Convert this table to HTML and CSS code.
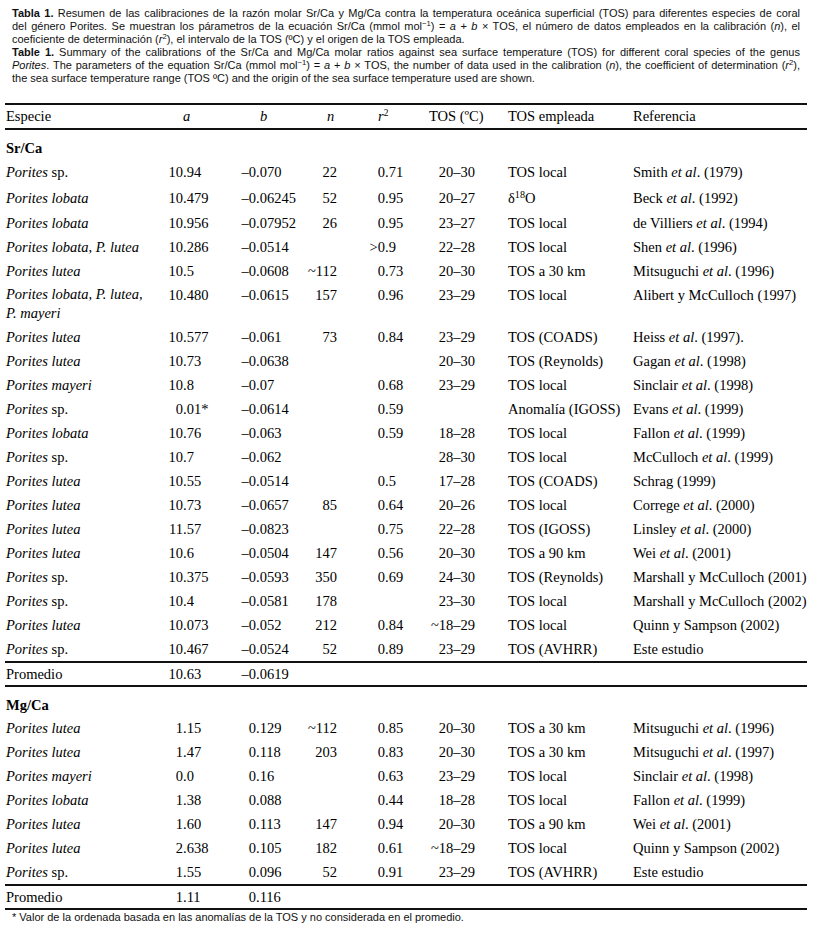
FILE: index.html
```html
<!DOCTYPE html>
<html lang="es">
<head>
<meta charset="utf-8">
<title>Tabla 1</title>
<link rel="stylesheet" href="styles.css">
</head>
<body>
<div class="caption">
  <p class="cap">
    <span class="l"><b>Tabla 1.</b> Resumen de las calibraciones de la razón molar Sr/Ca y Mg/Ca contra la temperatura oceánica superficial (TOS) para diferentes especies de coral</span>
    <span class="l">del género Porites. Se muestran los párametros de la ecuación Sr/Ca (mmol mol<sup>−1</sup>) = <i>a</i> + <i>b</i> × TOS, el número de datos empleados en la calibración (<i>n</i>), el</span>
    <span class="l last">coeficiente de determinación (<i>r</i><sup>2</sup>), el intervalo de la TOS (ºC) y el origen de la TOS empleada.</span>
  </p>
  <p class="cap">
    <span class="l"><b>Table 1.</b> Summary of the calibrations of the Sr/Ca and Mg/Ca molar ratios against sea surface temperature (TOS) for different coral species of the genus</span>
    <span class="l"><i>Porites</i>. The parameters of the equation Sr/Ca (mmol mol<sup>−1</sup>) = <i>a</i> + <i>b</i> × TOS, the number of data used in the calibration (<i>n</i>), the coefficient of determination (<i>r</i><sup>2</sup>),</span>
    <span class="l last">the sea surface temperature range (TOS ºC) and the origin of the sea surface temperature used are shown.</span>
  </p>
</div>

<table class="data">
  <colgroup>
    <col class="c1"><col class="c2"><col class="c3"><col class="c4"><col class="c5"><col class="c6"><col class="c7"><col class="c8">
  </colgroup>
  <thead>
    <tr class="head">
      <th class="h1">Especie</th>
      <th class="h2"><i>a</i></th>
      <th class="h3"><i>b</i></th>
      <th class="h4"><i>n</i></th>
      <th class="h5"><i>r</i><sup>2</sup></th>
      <th class="h6">TOS (ºC)</th>
      <th class="h7">TOS empleada</th>
      <th class="h8">Referencia</th>
    </tr>
  </thead>
  <tbody>
    <tr class="section first"><td colspan="8"><b>Sr/Ca</b></td></tr>
    <tr><td><i>Porites</i> sp.</td><td class="a"><span class="i">10</span>.94</td><td class="b"><span class="i">–0</span>.070</td><td class="n">22</td><td class="r"><span class="i">0</span>.71</td><td class="t">20–30</td><td class="e">TOS local</td><td class="ref">Smith <i>et al</i>. (1979)</td></tr>
    <tr class="tall"><td><i>Porites lobata</i></td><td class="a"><span class="i">10</span>.479</td><td class="b"><span class="i">–0</span>.06245</td><td class="n">52</td><td class="r"><span class="i">0</span>.95</td><td class="t">20–27</td><td class="e">δ<sup class="big">18</sup>O</td><td class="ref">Beck <i>et al</i>. (1992)</td></tr>
    <tr><td><i>Porites lobata</i></td><td class="a"><span class="i">10</span>.956</td><td class="b"><span class="i">–0</span>.07952</td><td class="n">26</td><td class="r"><span class="i">0</span>.95</td><td class="t">23–27</td><td class="e">TOS local</td><td class="ref">de Villiers <i>et al</i>. (1994)</td></tr>
    <tr><td><i>Porites lobata, P. lutea</i></td><td class="a"><span class="i">10</span>.286</td><td class="b"><span class="i">–0</span>.0514</td><td class="n"></td><td class="r"><span class="i">&gt;0</span>.9</td><td class="t">22–28</td><td class="e">TOS local</td><td class="ref">Shen <i>et al</i>. (1996)</td></tr>
    <tr><td><i>Porites lutea</i></td><td class="a"><span class="i">10</span>.5</td><td class="b"><span class="i">–0</span>.0608</td><td class="n">~112</td><td class="r"><span class="i">0</span>.73</td><td class="t">20–30</td><td class="e">TOS a 30 km</td><td class="ref">Mitsuguchi <i>et al</i>. (1996)</td></tr>
    <tr class="double"><td class="twoline"><i>Porites lobata, P. lutea,<br>P. mayeri</i></td><td class="a"><span class="i">10</span>.480</td><td class="b"><span class="i">–0</span>.0615</td><td class="n">157</td><td class="r"><span class="i">0</span>.96</td><td class="t">23–29</td><td class="e">TOS local</td><td class="ref">Alibert y McCulloch (1997)</td></tr>
    <tr><td><i>Porites lutea</i></td><td class="a"><span class="i">10</span>.577</td><td class="b"><span class="i">–0</span>.061</td><td class="n">73</td><td class="r"><span class="i">0</span>.84</td><td class="t">23–29</td><td class="e">TOS (COADS)</td><td class="ref">Heiss <i>et al</i>. (1997).</td></tr>
    <tr><td><i>Porites lutea</i></td><td class="a"><span class="i">10</span>.73</td><td class="b"><span class="i">–0</span>.0638</td><td class="n"></td><td class="r"></td><td class="t">20–30</td><td class="e">TOS (Reynolds)</td><td class="ref">Gagan <i>et al</i>. (1998)</td></tr>
    <tr><td><i>Porites mayeri</i></td><td class="a"><span class="i">10</span>.8</td><td class="b"><span class="i">–0</span>.07</td><td class="n"></td><td class="r"><span class="i">0</span>.68</td><td class="t">23–29</td><td class="e">TOS local</td><td class="ref">Sinclair <i>et al</i>. (1998)</td></tr>
    <tr><td><i>Porites</i> sp.</td><td class="a"><span class="i">0</span>.01*</td><td class="b"><span class="i">–0</span>.0614</td><td class="n"></td><td class="r"><span class="i">0</span>.59</td><td class="t"></td><td class="e">Anomalía (IGOSS)</td><td class="ref">Evans <i>et al</i>. (1999)</td></tr>
    <tr><td><i>Porites lobata</i></td><td class="a"><span class="i">10</span>.76</td><td class="b"><span class="i">–0</span>.063</td><td class="n"></td><td class="r"><span class="i">0</span>.59</td><td class="t">18–28</td><td class="e">TOS local</td><td class="ref">Fallon <i>et al</i>. (1999)</td></tr>
    <tr><td><i>Porites</i> sp.</td><td class="a"><span class="i">10</span>.7</td><td class="b"><span class="i">–0</span>.062</td><td class="n"></td><td class="r"></td><td class="t">28–30</td><td class="e">TOS local</td><td class="ref">McCulloch <i>et al</i>. (1999)</td></tr>
    <tr><td><i>Porites lutea</i></td><td class="a"><span class="i">10</span>.55</td><td class="b"><span class="i">–0</span>.0514</td><td class="n"></td><td class="r"><span class="i">0</span>.5</td><td class="t">17–28</td><td class="e">TOS (COADS)</td><td class="ref">Schrag (1999)</td></tr>
    <tr><td><i>Porites lutea</i></td><td class="a"><span class="i">10</span>.73</td><td class="b"><span class="i">–0</span>.0657</td><td class="n">85</td><td class="r"><span class="i">0</span>.64</td><td class="t">20–26</td><td class="e">TOS local</td><td class="ref">Correge <i>et al</i>. (2000)</td></tr>
    <tr><td><i>Porites lutea</i></td><td class="a"><span class="i">11</span>.57</td><td class="b"><span class="i">–0</span>.0823</td><td class="n"></td><td class="r"><span class="i">0</span>.75</td><td class="t">22–28</td><td class="e">TOS (IGOSS)</td><td class="ref">Linsley <i>et al</i>. (2000)</td></tr>
    <tr><td><i>Porites lutea</i></td><td class="a"><span class="i">10</span>.6</td><td class="b"><span class="i">–0</span>.0504</td><td class="n">147</td><td class="r"><span class="i">0</span>.56</td><td class="t">20–30</td><td class="e">TOS a 90 km</td><td class="ref">Wei <i>et al</i>. (2001)</td></tr>
    <tr><td><i>Porites</i> sp.</td><td class="a"><span class="i">10</span>.375</td><td class="b"><span class="i">–0</span>.0593</td><td class="n">350</td><td class="r"><span class="i">0</span>.69</td><td class="t">24–30</td><td class="e">TOS (Reynolds)</td><td class="ref">Marshall y McCulloch (2001)</td></tr>
    <tr><td><i>Porites</i> sp.</td><td class="a"><span class="i">10</span>.4</td><td class="b"><span class="i">–0</span>.0581</td><td class="n">178</td><td class="r"></td><td class="t">23–30</td><td class="e">TOS local</td><td class="ref">Marshall y McCulloch (2002)</td></tr>
    <tr><td><i>Porites lutea</i></td><td class="a"><span class="i">10</span>.073</td><td class="b"><span class="i">–0</span>.052</td><td class="n">212</td><td class="r"><span class="i">0</span>.84</td><td class="t">~18–29</td><td class="e">TOS local</td><td class="ref">Quinn y Sampson (2002)</td></tr>
    <tr><td><i>Porites</i> sp.</td><td class="a"><span class="i">10</span>.467</td><td class="b"><span class="i">–0</span>.0524</td><td class="n">52</td><td class="r"><span class="i">0</span>.89</td><td class="t">23–29</td><td class="e">TOS (AVHRR)</td><td class="ref">Este estudio</td></tr>
    <tr class="avg"><td>Promedio</td><td class="a"><span class="i">10</span>.63</td><td class="b"><span class="i">–0</span>.0619</td><td></td><td></td><td></td><td></td><td></td></tr>

    <tr class="section second"><td colspan="8"><b>Mg/Ca</b></td></tr>
    <tr><td><i>Porites lutea</i></td><td class="a"><span class="i">1</span>.15</td><td class="b"><span class="i">0</span>.129</td><td class="n">~112</td><td class="r"><span class="i">0</span>.85</td><td class="t">20–30</td><td class="e">TOS a 30 km</td><td class="ref">Mitsuguchi <i>et al</i>. (1996)</td></tr>
    <tr><td><i>Porites lutea</i></td><td class="a"><span class="i">1</span>.47</td><td class="b"><span class="i">0</span>.118</td><td class="n">203</td><td class="r"><span class="i">0</span>.83</td><td class="t">20–30</td><td class="e">TOS a 30 km</td><td class="ref">Mitsuguchi <i>et al</i>. (1997)</td></tr>
    <tr><td><i>Porites mayeri</i></td><td class="a"><span class="i">0</span>.0</td><td class="b"><span class="i">0</span>.16</td><td class="n"></td><td class="r"><span class="i">0</span>.63</td><td class="t">23–29</td><td class="e">TOS local</td><td class="ref">Sinclair <i>et al</i>. (1998)</td></tr>
    <tr><td><i>Porites lobata</i></td><td class="a"><span class="i">1</span>.38</td><td class="b"><span class="i">0</span>.088</td><td class="n"></td><td class="r"><span class="i">0</span>.44</td><td class="t">18–28</td><td class="e">TOS local</td><td class="ref">Fallon <i>et al</i>. (1999)</td></tr>
    <tr><td><i>Porites lutea</i></td><td class="a"><span class="i">1</span>.60</td><td class="b"><span class="i">0</span>.113</td><td class="n">147</td><td class="r"><span class="i">0</span>.94</td><td class="t">20–30</td><td class="e">TOS a 90 km</td><td class="ref">Wei <i>et al</i>. (2001)</td></tr>
    <tr><td><i>Porites lutea</i></td><td class="a"><span class="i">2</span>.638</td><td class="b"><span class="i">0</span>.105</td><td class="n">182</td><td class="r"><span class="i">0</span>.61</td><td class="t">~18–29</td><td class="e">TOS local</td><td class="ref">Quinn y Sampson (2002)</td></tr>
    <tr><td><i>Porites</i> sp.</td><td class="a"><span class="i">1</span>.55</td><td class="b"><span class="i">0</span>.096</td><td class="n">52</td><td class="r"><span class="i">0</span>.91</td><td class="t">23–29</td><td class="e">TOS (AVHRR)</td><td class="ref">Este estudio</td></tr>
    <tr class="avg"><td>Promedio</td><td class="a"><span class="i">1</span>.11</td><td class="b"><span class="i">0</span>.116</td><td></td><td></td><td></td><td></td><td></td></tr>
  </tbody>
</table>

<p class="foot">* Valor de la ordenada basada en las anomalías de la TOS y no considerada en el promedio.</p>
</body>
</html>
```

FILE: styles.css
```css
html, body {
  margin: 0;
  padding: 0;
  background: #fff;
  color: #000;
}

body {
  width: 813px;
}

.caption {
  padding: 7px 13px 0 12px;
  font-family: "Liberation Sans", Arial, sans-serif;
  font-size: 11px;
  line-height: 13px;
  color: #111;
}

.cap {
  margin: 0;
}

.cap .l {
  display: block;
  text-align: justify;
  text-align-last: justify;
}

.cap .l.last {
  text-align-last: left;
}

.cap sup {
  font-size: 0.7em;
  line-height: 0;
  vertical-align: 0.5em;
}

.data {
  margin: 18px 0 0 5px;
  width: 802px;
  table-layout: fixed;
  border-collapse: separate;
  border-spacing: 0;
  font-family: "Liberation Serif", "Times New Roman", serif;
  font-size: 14.5px;
  line-height: 18px;
  color: #000;
}

.c1 { width: 155px; }
.c2 { width: 55px; }
.c3 { width: 80px; }
.c4 { width: 50px; }
.c5 { width: 70px; }
.c6 { width: 75px; }
.c7 { width: 140px; }
.c8 { width: 177px; }

.data th,
.data td {
  padding: 0;
  height: 24px;
  vertical-align: middle;
  white-space: nowrap;
  font-weight: normal;
  text-align: left;
}

.data td:first-child,
.data th:first-child {
  padding-left: 1px;
}

.head th {
  height: 21px;
  padding-bottom: 2px;
  border-top: 2px solid #111;
  border-bottom: 2px solid #111;
}

.data th sup {
  font-size: 0.65em;
  line-height: 0;
  vertical-align: 0.55em;
}

.h2 { padding-left: 23px !important; }
.h3 { padding-left: 45px !important; }
.h4 { padding-left: 32px !important; }
.h5 { padding-left: 33px !important; }
.h6 { padding-left: 14px !important; }
.h7 { padding-left: 18px !important; }
.h8 { padding-left: 3px !important; }

.section td {
  vertical-align: bottom;
}

.section.first td {
  height: 27px;
  padding-bottom: 3px;
}

.section.second td {
  height: 27px;
  padding-bottom: 2px;
}

.i {
  display: inline-block;
  text-align: right;
}

.a .i { width: 23px; }
.b .i { width: 41px; }
.r .i { width: 40px; }

.n {
  text-align: right !important;
  padding-right: 8px !important;
}

.t {
  text-align: right !important;
  padding-right: 15px !important;
}

.e {
  padding-left: 18px !important;
}

.ref {
  padding-left: 3px !important;
}

.tall td {
  height: 27px;
}

.e sup.big {
  font-size: 0.7em;
  line-height: 0;
  vertical-align: 0.5em;
}

.double td {
  height: 39px;
  vertical-align: top;
  padding-top: 3px;
}

.double td.twoline {
  height: 40px;
  line-height: 19px;
  padding-top: 2px;
}

.avg td {
  height: 22px;
  border-top: 2px solid #111;
  border-bottom: 2px solid #111;
}

.foot {
  margin: 1px 0 0 12px;
  font-family: "Liberation Sans", Arial, sans-serif;
  font-size: 11px;
  line-height: 13px;
  color: #111;
}
```
